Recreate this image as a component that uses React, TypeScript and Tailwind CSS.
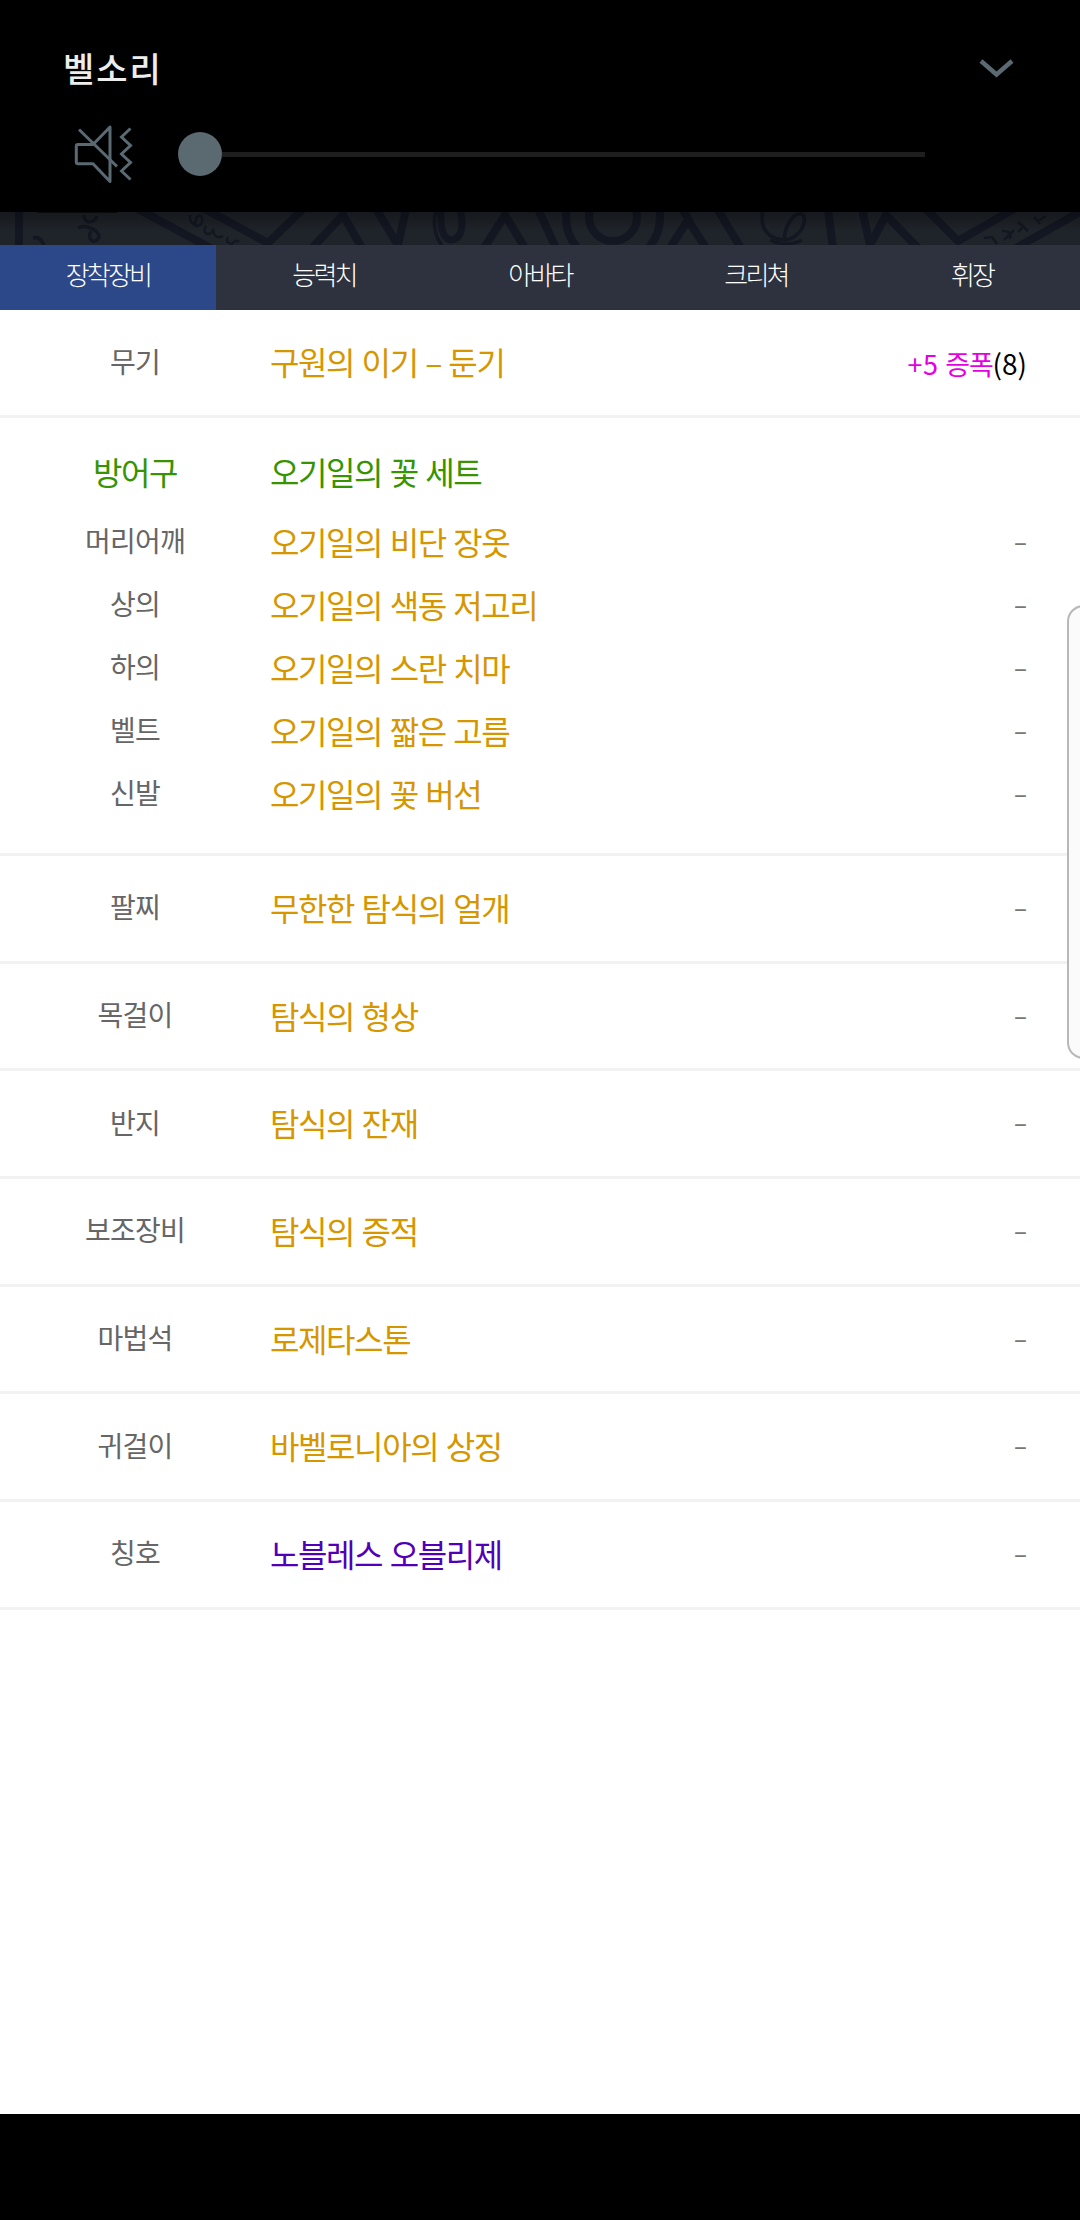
const tabs = ["장착장비", "능력치", "아바타", "크리쳐", "휘장"];

const armor = [
  { slot: "머리어깨", name: "오기일의 비단 장옷" },
  { slot: "상의", name: "오기일의 색동 저고리" },
  { slot: "하의", name: "오기일의 스란 치마" },
  { slot: "벨트", name: "오기일의 짧은 고름" },
  { slot: "신발", name: "오기일의 꽃 버선" },
];

const accessories = [
  { slot: "팔찌", name: "무한한 탐식의 얼개" },
  { slot: "목걸이", name: "탐식의 형상" },
  { slot: "반지", name: "탐식의 잔재" },
  { slot: "보조장비", name: "탐식의 증적" },
  { slot: "마법석", name: "로제타스톤" },
  { slot: "귀걸이", name: "바벨로니아의 상징" },
  { slot: "칭호", name: "노블레스 오블리제", color: "text-[#5200b8]" },
];

function Slot({ children }: { children: string }) {
  return (
    <div className="w-[270px] pb-[4px] text-center text-[28px] tracking-[-0.8px] text-[#666]">{children}</div>
  );
}

function Name({ children, color = "text-[#d69600]" }: { children: string; color?: string }) {
  return (
    <div className={`flex-1 pb-[3px] text-[32px] tracking-[-1.4px] [word-spacing:1.7px] ${color}`}>{children}</div>
  );
}

function Dash() {
  return <span className="pb-[3px] text-[24px] font-medium text-[#777]">–</span>;
}

function VolumePanel() {
  return (
    <div className="h-[212px] bg-black">
      <div className="flex h-[108px] items-end justify-between pr-[64px] pl-[63px]">
        <div className="pb-[16px] text-[34px] leading-[48px] font-medium tracking-[2px] text-[#ededed]">벨소리</div>
        <svg className="mb-[28px]" width="40" height="24" viewBox="0 0 40 24" fill="none" stroke="#5b6a72" strokeWidth="4.5">
          <path d="M5 5 L20.500 18.500 L36 5" />
        </svg>
      </div>
      <div className="flex h-[92px] items-center pl-[72px]">
        <svg width="64" height="64" viewBox="0 0 64 64" fill="none" stroke="#5b6a72" strokeWidth="3">
          <path d="M21 22.500 H6 Q4.300 22.500 4.300 24 V40 Q4.300 41.700 6 41.700 H21 L38 59.500 V5 Z" strokeLinejoin="round" />
          <path d="M7 7.500 L45 44.500" />
          <path d="M58.500 6.500 L49.500 15 L58.500 23.500 L49.500 32 L58.500 40.500 L49.500 49 L58.500 57.500" />
        </svg>
        <div className="ml-[42px] size-[44px] rounded-full bg-[#5b6970]" />
        <div className="h-[5px] w-[703px] bg-[#1e1e1e]" />
      </div>
    </div>
  );
}

function Banner() {
  return (
    <svg className="block" width="1080" height="33" viewBox="0 0 1080 33">
      <defs>
        <linearGradient id="shade" x1="0" y1="0" x2="0" y2="1">
          <stop offset="0" stopColor="#000" stopOpacity="0.3" />
          <stop offset="0.6" stopColor="#000" stopOpacity="0" />
        </linearGradient>
      </defs>
      <rect width="1080" height="33" fill="#1f242a" />
      <g fill="none" stroke="#131722" strokeWidth="8">
        <path d="M19 0 V33 M138 -3 L214 38 M205 -3 L268 31 L303 -3 M312 36 L343 3 L362 36 M376 -3 L398 33 L406 -3" />
        <path d="M484 36 L505 3 L525 36 M538 -3 L556 36" />
        <circle cx="613" cy="5" r="24" />
        <circle cx="613" cy="5" r="47" />
        <path d="M670 36 L688 8 L706 36 M682 -4 L690 10 M716 -5 L741 36 M828 -3 L833 36 M862 -3 L870 33 L886 3 L918 36 M926 -3 L958 29 L1014 -3 M1016 36 L1080 0" />
      </g>
      <g fill="none" stroke="#131722" strokeWidth="3.500">
        <path d="M436 -2 C432 12 436 27 442 33" />
        <path d="M441 0 C440 18 444 28 452 28 C462 27 464 12 460 -2" strokeWidth="7" />
        <path d="M763 -2 C759 16 768 27 784 28 C798 27 806 14 804 4 C800 -3 786 6 784 28 M770 28 Q786 36 802 28" />
        <path d="M84 3 C84 12 94 12 97 4 M78 16 C86 12 99 18 99 25 C96 33 86 29 91 19 M33 26 Q40 24 44 33" />
        <path d="M190 3 Q189 11 197 14 Q205 12 201 4 Q196 2 195 12" strokeWidth="2.500" />
        <path d="M206 14 Q202 22 209 22 Q214 20 213 17 Q214 28 223 24 M228 25 Q225 31 232 32 Q236 27 239 30" strokeWidth="2.500" />
        <path d="M984 26 L992 25 L997 32 M1002 19 Q1012 18 1010 27 M1004 28 L1014 18 M1018 10 L1028 19 M1022 16 L1018 20 M1034 5 L1040 12 M1038 9 L1046 4" strokeWidth="2.500" />
      </g>
      <rect width="1080" height="33" fill="url(#shade)" />
      <rect x="38" width="79" height="1" fill="#0a0a0a" />
    </svg>
  );
}

export default function App() {
  return (
    <div className="relative flex h-[2220px] w-[1080px] flex-col overflow-hidden bg-white font-['Noto_Sans_CJK_KR',sans-serif] leading-none">
      <VolumePanel />
      <Banner />

      <nav className="grid h-[65px] grid-cols-5 bg-[#2d323e] text-[26px] font-light tracking-[-2.800px] text-white">
        {tabs.map((tab, i) => (
          <div key={tab} className={`flex items-center justify-center pb-[7px] ${i === 0 ? "bg-[#2d4889]" : ""}`}>
            {tab}
          </div>
        ))}
      </nav>

      <div className="flex h-[108px] items-center border-b-[3px] border-[#f2f2f2] pr-[53px]">
        <Slot>무기</Slot>
        <Name>구원의 이기 – 둔기</Name>
        <div className="text-[27px] tracking-[-1.200px] text-[#e400e0] [word-spacing:2px]">
          <span className="tracking-[0.4px]">+5</span> 증폭<span className="text-[28px] tracking-normal text-black">(8)</span>
        </div>
      </div>

      <div className="h-[438px] border-b-[3px] border-[#f2f2f2] pt-[20px]">
        <div className="flex h-[72px] items-center pb-[7px] text-[32px] tracking-[-1.400px] text-[#379400] [word-spacing:1.7px]">
          <div className="w-[270px] text-center">방어구</div>
          <div>오기일의 꽃 세트</div>
        </div>
        {armor.map((item) => (
          <div key={item.slot} className="flex h-[63px] items-center pt-[1px] pr-[53px]">
            <Slot>{item.slot}</Slot>
            <Name>{item.name}</Name>
            <Dash />
          </div>
        ))}
      </div>

      {accessories.map((item) => (
        <div key={item.slot} className="flex h-[107.700px] shrink-0 items-center border-b-[3px] border-[#f2f2f2] pr-[53px]">
          <Slot>{item.slot}</Slot>
          <Name color={item.color}>{item.name}</Name>
          <Dash />
        </div>
      ))}

      <div className="mt-auto h-[106px] bg-black" />

      {/* edge panel handle, hangs over the right side of the list */}
      <div className="absolute top-[605px] -right-[20px] h-[454px] w-[33px] rounded-[18px] border-2 border-[#b8b8b8] bg-[#fbfbfb]" />
    </div>
  );
}
